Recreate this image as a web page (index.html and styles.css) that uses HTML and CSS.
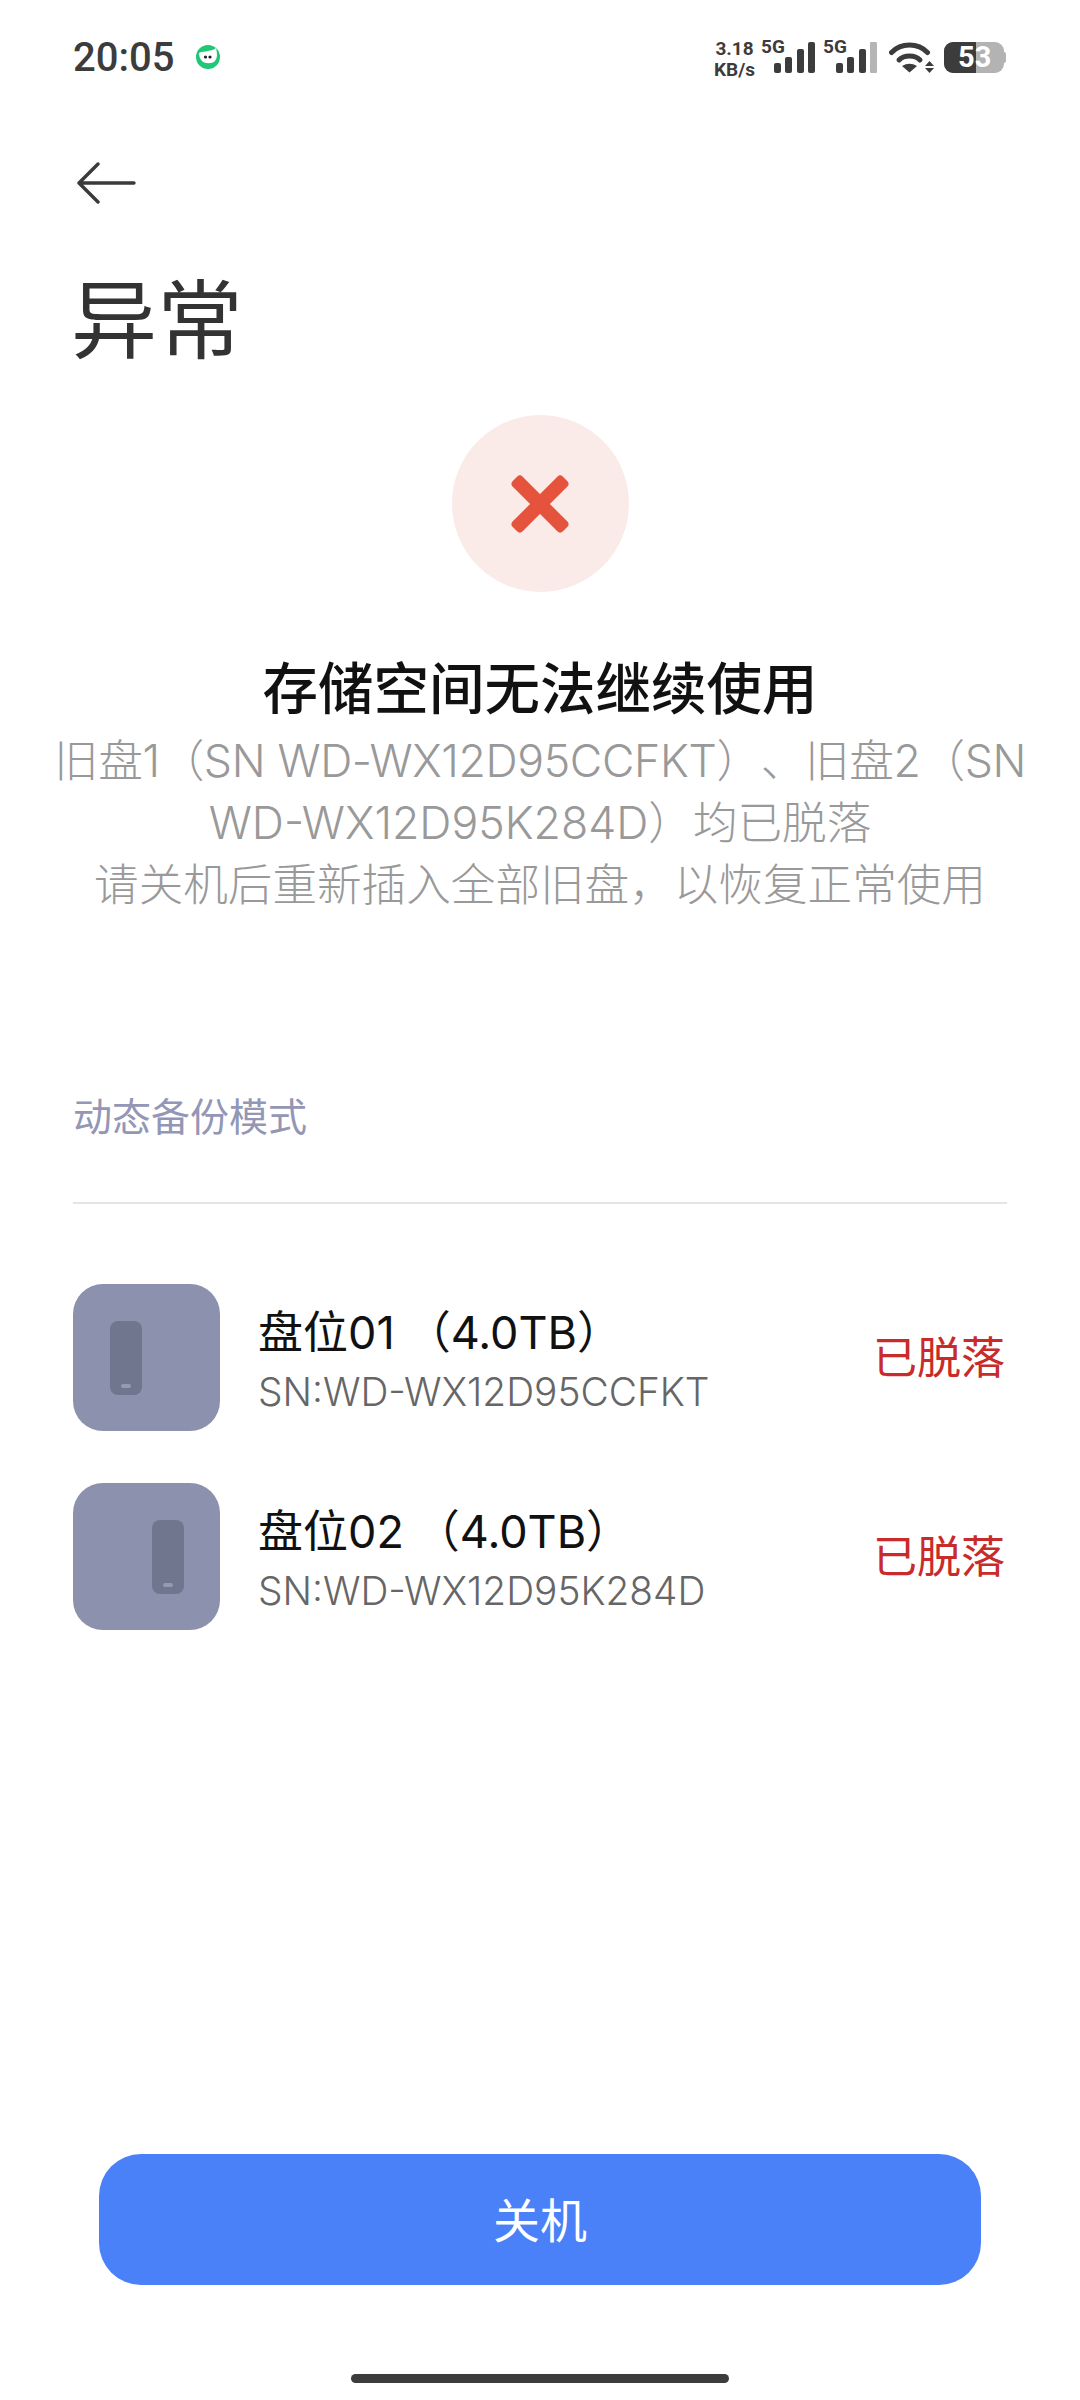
FILE: index.html
```html
<!DOCTYPE html>
<html lang="zh-CN">
<head>
    <meta charset="UTF-8">
    <meta name="viewport" content="width=device-width, initial-scale=1.0">
    <title>异常</title>
    <link rel="stylesheet" href="styles.css">
</head>
<body>
    <div class="screen">
        <div class="status-bar">
            <div class="status-left">
                <span class="clock">20:05</span>
                <svg class="app-dot" width="26" height="26" viewBox="0 0 26 26">
                    <circle cx="13" cy="13" r="12" fill="#1fc777"/>
                    <path d="M4 9C7 7 10 8 13 7C16 6 19 6 21 4C22 9 23 13 20 17C17 20 10 20 7 17C5 15 4 12 4 9Z" fill="#fff"/>
                    <circle cx="10.500" cy="13" r="1.600" fill="#222"/>
                    <circle cx="15" cy="13" r="1.600" fill="#222"/>
                </svg>
            </div>
            <div class="status-right">
                <div class="speed"><span>3.18</span><span>KB/s</span></div>
                <div class="signal first">
                    <span class="net">5G</span>
                    <svg width="41" height="31" viewBox="0 0 41 31">
                        <rect x="0" y="21" width="7" height="10" rx="2" fill="#3c3c3c"/>
                        <rect x="11" y="15" width="7" height="16" rx="2" fill="#3c3c3c"/>
                        <rect x="23" y="7" width="7" height="24" rx="2" fill="#3c3c3c"/>
                        <rect x="34" y="0" width="7" height="31" rx="2" fill="#3c3c3c"/>
                    </svg>
                </div>
                <div class="signal">
                    <span class="net">5G</span>
                    <svg width="41" height="31" viewBox="0 0 41 31">
                        <rect x="0" y="21" width="7" height="10" rx="2" fill="#3c3c3c"/>
                        <rect x="11" y="15" width="7" height="16" rx="2" fill="#3c3c3c"/>
                        <rect x="23" y="7" width="7" height="24" rx="2" fill="#3c3c3c"/>
                        <rect x="34" y="0" width="7" height="31" rx="1" fill="#b5b5b5"/>
                    </svg>
                </div>
                <svg class="wifi" width="45" height="32" viewBox="0 0 45 32">
                    <path d="M2.500 11.500C12 1.500 29 1.500 38.500 11.500" fill="none" stroke="#3c3c3c" stroke-width="5" stroke-linecap="round"/>
                    <path d="M10 19C15 13.500 26 13.500 31 19" fill="none" stroke="#3c3c3c" stroke-width="5" stroke-linecap="round"/>
                    <path d="M13 25Q20.500 20.500 28 25L20.500 31.500Z" fill="#3c3c3c"/>
                    <path d="M36 25L40.500 20L45 25Z" fill="#3c3c3c"/>
                    <path d="M36 27L45 27L40.500 32Z" fill="#3c3c3c"/>
                </svg>
                <div class="battery"><div class="battery-fill"></div><span class="battery-num">53</span><i class="battery-tip"></i></div>
            </div>
        </div>

        <div class="back">
            <svg width="60" height="42" viewBox="0 0 60 42">
                <path d="M22 2L3 21L22 40M3 21H58" fill="none" stroke="#3a3a3a" stroke-width="3.400" stroke-linecap="round" stroke-linejoin="round"/>
            </svg>
        </div>

        <h1 class="page-title">异常</h1>

        <div class="error-badge">
            <svg width="64" height="64" viewBox="0 0 64 64">
                <g fill="#e5533d" transform="translate(32 32)">
                    <rect x="-35.500" y="-7" width="71" height="14" rx="4" transform="rotate(45)"/>
                    <rect x="-35.500" y="-7" width="71" height="14" rx="4" transform="rotate(-45)"/>
                </g>
            </svg>
        </div>

        <h2 class="error-title">存储空间无法继续使用</h2>
        <p class="error-text"><span class="tight-line">旧盘1（SN WD-WX12D95CCFKT）、旧盘2（SN</span><br>WD-WX12D95K284D）均已脱落<br>请关机后重新插入全部旧盘，以恢复正常使用</p>

        <div class="mode-label">动态备份模式</div>

        <div class="disk-list">
            <div class="disk-row">
                <div class="disk-tile">
                    <div class="disk-slot"><i></i></div>
                </div>
                <div class="disk-info">
                    <div class="disk-name">盘位01<span class="paren">（</span>4.0TB）</div>
                    <div class="disk-sn">SN:WD-WX12D95CCFKT</div>
                </div>
                <div class="disk-state">已脱落</div>
            </div>
            <div class="disk-row">
                <div class="disk-tile tile-right">
                    <div class="disk-slot"><i></i></div>
                </div>
                <div class="disk-info">
                    <div class="disk-name">盘位02<span class="paren">（</span>4.0TB）</div>
                    <div class="disk-sn">SN:WD-WX12D95K284D</div>
                </div>
                <div class="disk-state">已脱落</div>
            </div>
        </div>

        <div class="footer">
            <button class="power-button">关机</button>
            <div class="home-bar"></div>
        </div>
    </div>
</body>
</html>
```

FILE: styles.css
```css
* {
    margin: 0;
    padding: 0;
    box-sizing: border-box;
}

body {
    font-family: "Inter", "Noto Sans CJK SC", sans-serif;
    background: #fff;
    text-spacing-trim: space-all;
}

.screen {
    width: 1080px;
    height: 2400px;
    display: flex;
    flex-direction: column;
    padding: 0 73px;
}

.status-bar {
    height: 114px;
    display: flex;
    align-items: center;
    justify-content: space-between;
    color: #3c3c3c;
}

.status-left {
    display: flex;
    align-items: center;
    gap: 21px;
}

.clock {
    font-family: "Roboto", sans-serif;
    font-size: 40px;
    font-weight: 500;
}

.status-right {
    display: flex;
    align-items: center;
    margin-right: 3px;
}

.speed {
    display: flex;
    flex-direction: column;
    align-items: center;
    width: 41px;
    margin-top: 3px;
    font-family: "Roboto", sans-serif;
    font-size: 19px;
    font-weight: 700;
    line-height: 21px;
}

.signal {
    position: relative;
    width: 54px;
    height: 31px;
    margin-left: 8px;
    display: flex;
    justify-content: flex-end;
}

.signal.first {
    margin-left: 6px;
}

.net {
    position: absolute;
    top: -5px;
    left: 0;
    font-family: "Roboto", sans-serif;
    font-size: 19px;
    font-weight: 700;
    line-height: 19px;
}

.wifi {
    margin-left: 12px;
}

.battery {
    position: relative;
    width: 60px;
    height: 31px;
    margin-left: 10px;
    background: #b3b3b3;
    border-radius: 9px;
}

.battery-fill {
    width: 32px;
    height: 31px;
    background: #3c3c3c;
    border-radius: 9px 0 0 9px;
}

.battery-num {
    position: absolute;
    top: 0;
    left: 14px;
    font-family: "Roboto", sans-serif;
    font-size: 29px;
    font-weight: 700;
    line-height: 31px;
    color: #fff;
}

.battery-tip {
    position: absolute;
    top: 10px;
    right: -2px;
    width: 2px;
    height: 11px;
    background: #b3b3b3;
    border-radius: 0 2px 2px 0;
}

.back {
    height: 42px;
    margin-top: 48px;
    margin-left: 3px;
}

.page-title {
    font-size: 86px;
    font-weight: 400;
    line-height: 100px;
    color: #333;
    margin-top: 67px;
    margin-left: -2px;
}

.error-badge {
    width: 177px;
    height: 177px;
    border-radius: 50%;
    background: #faebe8;
    display: flex;
    align-items: center;
    justify-content: center;
    align-self: center;
    margin-top: 44px;
}

.error-title {
    font-size: 55.500px;
    font-weight: 500;
    line-height: 70px;
    color: #111;
    text-align: center;
    margin-top: 62px;
}

.error-text {
    font-size: 44.600px;
    font-weight: 300;
    line-height: 62px;
    color: #999;
    text-align: center;
    margin: 6px -30px 0;
    white-space: nowrap;
}

.tight-line {
    letter-spacing: -0.350px;
}

.mode-label {
    font-size: 39px;
    line-height: 50px;
    color: #9397b5;
    margin-top: 176px;
}

.disk-list {
    border-top: 2px solid #e4e4e4;
    margin-top: 60px;
    padding-top: 80px;
    display: flex;
    flex-direction: column;
    gap: 52px;
}

.disk-row {
    display: flex;
    align-items: center;
}

.disk-tile {
    width: 147px;
    height: 147px;
    border-radius: 30px;
    background: #8c92ae;
    display: flex;
    align-items: center;
    padding-left: 37px;
}

.tile-right {
    padding-left: 79px;
}

.disk-slot {
    width: 32px;
    height: 74px;
    border-radius: 8px;
    background: #6f768e;
    display: flex;
    flex-direction: column;
    justify-content: flex-end;
    align-items: center;
    padding-bottom: 7px;
}

.disk-slot i {
    width: 10px;
    height: 4px;
    border-radius: 2px;
    background: #959ab4;
}

.disk-info {
    flex: 1;
    margin-left: 38px;
    margin-top: 5px;
}

.disk-name {
    font-size: 45px;
    line-height: 58px;
    color: #111;
}

.paren {
    margin-left: 11px;
}

.disk-sn {
    font-size: 38.800px;
    font-weight: 300;
    line-height: 50px;
    margin-top: 5px;
    color: #666;
}

.disk-state {
    font-size: 44px;
    color: #c92a2a;
    margin-right: 2px;
    margin-bottom: 6px;
}

.footer {
    margin-top: auto;
    display: flex;
    flex-direction: column;
    align-items: center;
}

.power-button {
    width: 882px;
    height: 131px;
    border: none;
    border-radius: 42px;
    background: #4a80f8;
    color: #fff;
    font-family: inherit;
    font-size: 47px;
    padding-bottom: 4px;
}

.home-bar {
    width: 378px;
    height: 9px;
    border-radius: 5px;
    background: #3c3c3c;
    margin-top: 89px;
    margin-bottom: 17px;
}
```
